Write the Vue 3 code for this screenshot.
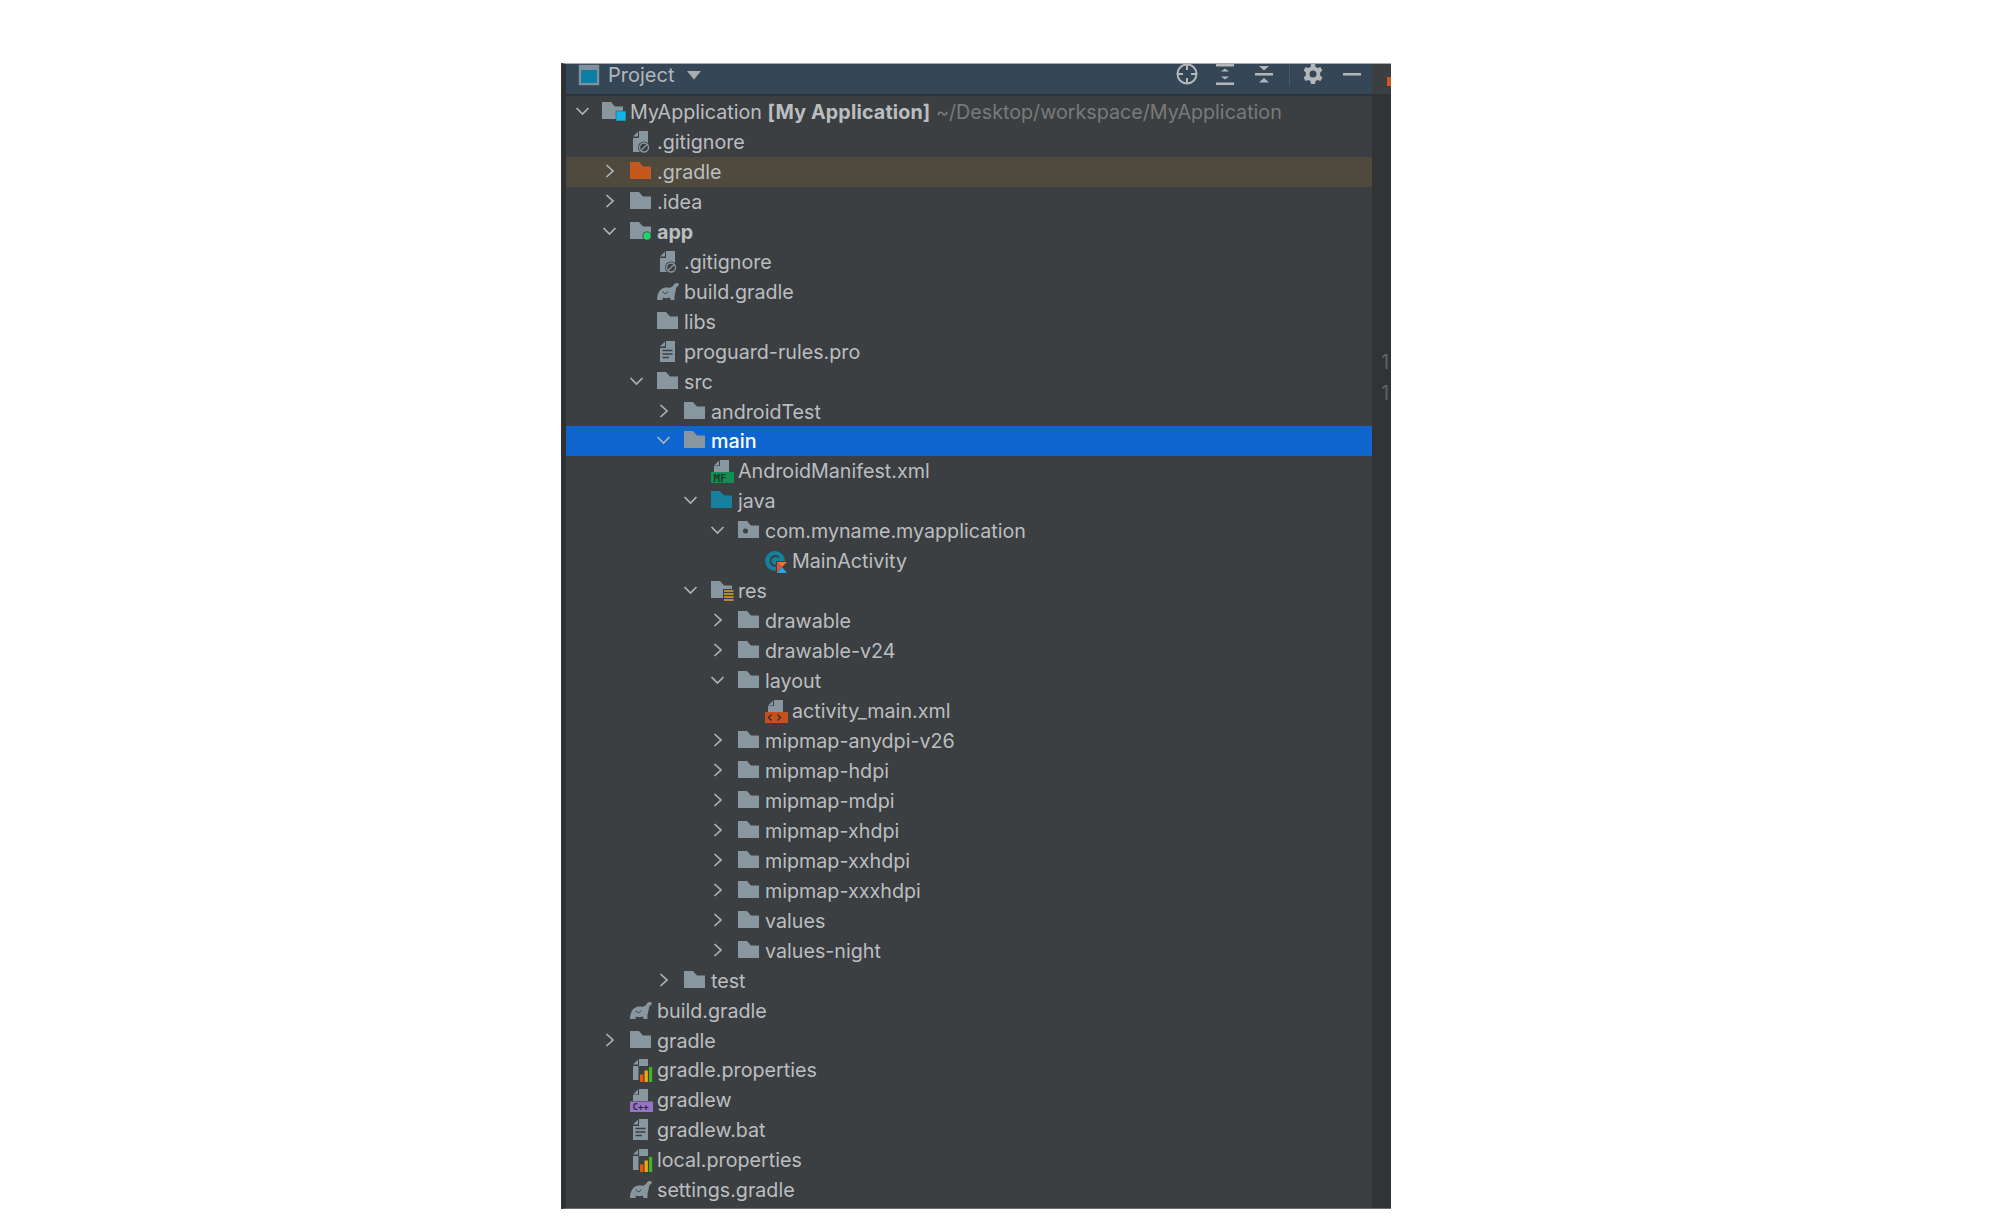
<script setup>
const r = (level, label, icon, chevron = '', extra = {}) => ({ level, label, icon, chevron, ...extra })
const rows = [
  r(0, 'MyApplication ', 'root', 'down', { bold: '[My Application]', muted: ' ~/Desktop/workspace/MyApplication' }),
  r(1, '.gitignore', 'ignore'),
  r(1, '.gradle', 'orange', 'right', { cls: 'excluded' }),
  r(1, '.idea', 'folder', 'right'),
  r(1, 'app', 'module', 'down', { strong: true }),
  r(2, '.gitignore', 'ignore'),
  r(2, 'build.gradle', 'gradle'),
  r(2, 'libs', 'folder'),
  r(2, 'proguard-rules.pro', 'text'),
  r(2, 'src', 'folder', 'down'),
  r(3, 'androidTest', 'folder', 'right'),
  r(3, 'main', 'folder', 'down', { cls: 'selected' }),
  r(4, 'AndroidManifest.xml', 'manifest'),
  r(4, 'java', 'source', 'down'),
  r(5, 'com.myname.myapplication', 'package', 'down'),
  r(6, 'MainActivity', 'kotlin'),
  r(4, 'res', 'res', 'down'),
  r(5, 'drawable', 'folder', 'right'),
  r(5, 'drawable-v24', 'folder', 'right'),
  r(5, 'layout', 'folder', 'down'),
  r(6, 'activity_main.xml', 'xml'),
  r(5, 'mipmap-anydpi-v26', 'folder', 'right'),
  r(5, 'mipmap-hdpi', 'folder', 'right'),
  r(5, 'mipmap-mdpi', 'folder', 'right'),
  r(5, 'mipmap-xhdpi', 'folder', 'right'),
  r(5, 'mipmap-xxhdpi', 'folder', 'right'),
  r(5, 'mipmap-xxxhdpi', 'folder', 'right'),
  r(5, 'values', 'folder', 'right'),
  r(5, 'values-night', 'folder', 'right'),
  r(3, 'test', 'folder', 'right'),
  r(1, 'build.gradle', 'gradle'),
  r(1, 'gradle', 'folder', 'right'),
  r(1, 'gradle.properties', 'props'),
  r(1, 'gradlew', 'cpp'),
  r(1, 'gradlew.bat', 'text'),
  r(1, 'local.properties', 'props'),
  r(1, 'settings.gradle', 'gradle'),
]
const folderPath = 'M0 5H9L13 9.5H21V22H0Z'
const pagePath = 'M9 4H18V25H3V11H9Z'
const foldPath = 'M3 9.5L8 4.5V9.5Z'
const elephant = 'M0 23C0 16 3.500 10.500 9 10.500C11 10.500 12.500 11 13.500 10.500C15 10 16 9 17 7.500C18 6 20.500 5.500 22 7L21 9.500C20 9 19.500 10 19 12C18.500 15 18 17 17.500 18.500L17.500 23H13.500L13 20.500C10.500 21.500 8 21.500 6 20.500L5.500 23H1.500Z'
</script>

<template>
  <div class="page">
    <section class="panel">
      <header class="toolbar">
        <div class="title">
          <svg class="project-icon" width="22" height="22" viewBox="0 0 22 22">
            <rect x="0.8" y="0.800" width="20.400" height="20.400" fill="#7f919c" />
            <rect x="3" y="6" width="16" height="13" fill="#0f7ea6" />
          </svg>
          <span class="title-text">Project</span>
          <svg class="caret" width="14" height="9" viewBox="0 0 14 9"><path d="M0 0H14L7 8.500Z" fill="#a9adb0" /></svg>
        </div>
        <div class="tools">
          <svg width="24" height="24" viewBox="0 0 24 24" fill="none" stroke="#b4b7b9" stroke-width="2">
            <circle cx="12" cy="12" r="9.500" />
            <path d="M12 2.500V8M12 16V21.500M2.500 12H8M16 12H21.500" />
          </svg>
          <svg class="expand" width="24" height="24" viewBox="0 0 24 24" fill="#b4b7b9">
            <path d="M3 1.500H21V4.500H3ZM3 20.500H21V23H3ZM12 6.500L16 9.500H8ZM12 17.500L8 14.500H16Z" />
          </svg>
          <svg width="24" height="24" viewBox="0 0 24 24" fill="#b4b7b9">
            <path d="M3 11H21V13.500H3ZM7 4H17L12 8.500ZM12 16L17 20.500H7Z" />
          </svg>
          <i class="sep"></i>
          <svg width="22" height="22" viewBox="0 0 22 22">
            <path fill="#b4b7b9" fill-rule="evenodd" d="M9 1H13L13.600 4A7.500 7.500 0 0 1 15.500 5.100L18.400 4.100L20.400 7.600L18.100 9.600A7.500 7.500 0 0 1 18.100 12.400L20.400 14.400L18.400 17.900L15.500 16.900A7.500 7.500 0 0 1 13.600 18L13 21H9L8.400 18A7.500 7.500 0 0 1 6.500 16.900L3.600 17.900L1.600 14.400L3.900 12.400A7.500 7.500 0 0 1 3.900 9.600L1.600 7.600L3.600 4.100L6.500 5.100A7.500 7.500 0 0 1 8.400 4ZM11 7.500A3.500 3.500 0 1 0 11 14.500A3.500 3.500 0 1 0 11 7.500Z" />
          </svg>
          <svg class="minimize" width="20" height="24" viewBox="0 0 20 24"><rect x="1" y="11" width="18" height="2.500" fill="#b4b7b9" /></svg>
        </div>
        <div class="corner"><i class="corner-mark"></i></div>
      </header>

      <div class="body">
        <div class="tree">
          <div
            v-for="(row, i) in rows"
            :key="i"
            class="row"
            :class="row.cls"
            :style="{ paddingLeft: 4 + row.level * 27 + 'px' }"
          >
            <svg class="chevron" width="24" height="30" viewBox="0 0 24 30" fill="none" stroke-width="1.700">
              <path v-if="row.chevron === 'down'" d="M6.500 11L12.500 17L18.500 11" />
              <path v-else-if="row.chevron === 'right'" d="M9.500 8L16 14L9.500 20" />
            </svg>
            <svg class="icon" width="27" height="30" viewBox="0 0 27 30">
              <template v-if="row.icon === 'folder'"><path :d="folderPath" fill="#87969f" /></template>
              <template v-else-if="row.icon === 'orange'"><path :d="folderPath" fill="#c5591d" /></template>
              <template v-else-if="row.icon === 'source'"><path :d="folderPath" fill="#17809f" /></template>
              <template v-else-if="row.icon === 'root'">
                <path d="M-1 5H8L12 9.500H20V22H-1Z" fill="#87969f" />
                <rect x="13" y="14" width="10" height="10" fill="#12b3e8" stroke="#3c3f41" stroke-width="0.500" />
              </template>
              <template v-else-if="row.icon === 'module'">
                <path :d="folderPath" fill="#87969f" />
                <circle cx="17" cy="19" r="4.500" fill="#3c3f41" />
                <circle cx="17" cy="19" r="3.700" fill="#1fd468" />
              </template>
              <template v-else-if="row.icon === 'package'">
                <path :d="folderPath" fill="#87969f" />
                <circle cx="7.500" cy="15" r="2.500" fill="#3c3f41" />
              </template>
              <template v-else-if="row.icon === 'res'">
                <path :d="folderPath" fill="#87969f" />
                <rect x="12" y="13" width="11" height="12" fill="#3c3f41" />
                <path d="M13 15H22.500M13 18H22.500M13 21H22.500M13 24H22.500" stroke="#e8a21d" stroke-width="1.700" />
              </template>
              <template v-else-if="row.icon === 'ignore'">
                <path :d="pagePath" fill="#87969f" /><path :d="foldPath" fill="#87969f" />
                <circle cx="14" cy="20.500" r="6" fill="#3c3f41" />
                <circle cx="14" cy="20.500" r="4.500" fill="none" stroke="#87969f" stroke-width="1.400" />
                <path d="M11 23.500L17 17.500" stroke="#87969f" stroke-width="1.300" />
              </template>
              <template v-else-if="row.icon === 'text'">
                <path :d="pagePath" fill="#87969f" /><path :d="foldPath" fill="#87969f" />
                <path d="M5.500 13.500H15.500M5.500 17H15.500M5.500 20.500H12" stroke="#3c3f41" stroke-width="1.300" />
              </template>
              <template v-else-if="row.icon === 'props'">
                <path :d="pagePath" fill="#87969f" /><path :d="foldPath" fill="#87969f" />
                <rect x="8.500" y="11" width="15" height="16.500" fill="#3c3f41" />
                <rect x="10" y="19.500" width="3.400" height="7.500" fill="#ec5a00" />
                <rect x="14.500" y="15.500" width="3.400" height="11.500" fill="#eda513" />
                <rect x="19" y="12" width="3.200" height="15" fill="#3fb81f" />
              </template>
              <template v-else-if="row.icon === 'gradle'">
                <path :d="elephant" fill="#87969f" />
                <path d="M6 14.500C6.500 17 10 17.500 11 14.500" fill="none" stroke="#3c3f41" stroke-width="1" />
              </template>
              <template v-else-if="row.icon === 'manifest'">
                <path d="M9 4H18V16H3V10H9Z" fill="#87969f" /><path :d="foldPath" fill="#87969f" />
                <rect y="16" width="23" height="11" fill="#0f8f52" />
                <text x="2.500" y="25.500" class="badge" fill="#1f3a2c">MF</text>
              </template>
              <template v-else-if="row.icon === 'xml'">
                <path d="M9 4H18V16H3V10H9Z" fill="#87969f" /><path :d="foldPath" fill="#87969f" />
                <rect y="16" width="23" height="11" fill="#c4501a" />
                <path d="M6.500 18.500L3.500 21.500L6.500 24.500M12.500 18.500L15.500 21.500L12.500 24.500" fill="none" stroke="#2f2f2f" stroke-width="1.400" />
              </template>
              <template v-else-if="row.icon === 'cpp'">
                <path d="M9 4H18V16H3V10H9Z" fill="#87969f" /><path :d="foldPath" fill="#87969f" />
                <rect y="16.500" width="23" height="10.500" fill="#9673c4" />
                <text x="2.500" y="25.300" class="badge small" fill="#2e2a3a">C++</text>
              </template>
              <template v-else-if="row.icon === 'kotlin'">
                <circle cx="10" cy="15" r="10" fill="#13829f" />
                <path d="M14 11.500A5 5 0 1 0 14 18.500" fill="none" stroke="#3c3f41" stroke-width="2" />
                <rect x="11" y="15" width="12" height="13" fill="#3c3f41" />
                <path d="M12 16H22L17 21L12 16Z" fill="#f0742d" />
                <path d="M12 16V27L17 21Z" fill="#e0503a" />
                <path d="M17 21L22 27H12Z" fill="#28a6e8" />
              </template>
            </svg>
            <span class="label" :class="{ strong: row.strong }">{{ row.label }}<b v-if="row.bold">{{ row.bold }}</b><span v-if="row.muted" class="muted">{{ row.muted }}</span></span>
          </div>
        </div>
        <aside class="gutter">
          <span>1</span>
          <span>1</span>
        </aside>
      </div>
    </section>
  </div>
</template>

<style scoped>
.page {
  width: 2000px;
  height: 1229px;
  box-sizing: border-box;
  padding: 63px 0 0 561px;
  background: #fff;
  overflow: hidden;
}
.panel {
  width: 830px;
  height: 1146px;
  box-sizing: border-box;
  display: flex;
  flex-direction: column;
  background: #3c3f41;
  border-top: 1px solid #a9acae;
  border-bottom: 1px solid #6b6e70;
  border-left: 5px solid #2f3133;
  overflow: hidden;
  font-family: Inter, "Liberation Sans", sans-serif;
  font-size: 19.7px;
  color: #bbbec0;
}
.toolbar {
  height: 30px;
  flex: none;
  display: flex;
  align-items: center;
  background: #354657;
  border-bottom: 2px solid #2e3338;
  overflow: hidden;
}
.title {
  display: flex;
  align-items: center;
  padding-left: 12px;
  margin-bottom: 8px;
}
.project-icon {
  margin-right: 8px;
}
.title-text {
  font-size: 20px;
  line-height: 20px;
  color: #b4b7b9;
}
.caret {
  margin-left: 13px;
}
.tools {
  margin-left: auto;
  margin-bottom: 10px;
  display: flex;
  align-items: center;
  gap: 14px;
  padding-right: 10px;
}
.expand {
  margin-right: 1px;
}
.minimize {
  margin-left: 4px;
}
.sep {
  width: 1px;
  height: 24px;
  background: #4a5560;
  margin: 0 -1.5px;
}
.corner {
  width: 19px;
  align-self: stretch;
  background: #3c3f41;
  position: relative;
}
.corner-mark {
  position: absolute;
  right: 0;
  top: 13px;
  width: 4px;
  height: 9px;
  background: #d3561a;
}
.body {
  flex: 1;
  min-height: 0;
  display: flex;
}
.tree {
  flex: 1;
  min-width: 0;
  padding-top: 1px;
}
.row {
  height: 29.96px;
  display: flex;
  align-items: center;
  white-space: nowrap;
}
.row.excluded {
  background: #504a3e;
}
.row.selected {
  background: #0e65cf;
  color: #fff;
  font-weight: 500;
}
.chevron {
  flex: none;
  margin-right: 9px;
  stroke: #b0b3b5;
}
.icon {
  flex: none;
  overflow: visible;
}
.label.strong,
.label b {
  font-weight: 700;
}
.label b {
  letter-spacing: 0.15px;
}
.muted {
  color: #787a7c;
}
.badge {
  font-family: "DejaVu Sans Mono", monospace;
  font-size: 11px;
  font-weight: 700;
}
.badge.small {
  font-size: 9px;
}
.gutter {
  width: 19px;
  flex: none;
  box-sizing: border-box;
  background: #313335;
  padding-top: 254px;
  display: flex;
  flex-direction: column;
  align-items: flex-end;
  gap: 6px;
  color: #5f6264;
  font-size: 20px;
  line-height: 25px;
  overflow: hidden;
}
.gutter span {
  width: 9px;
  text-indent: -1px;
  overflow: hidden;
}
</style>
